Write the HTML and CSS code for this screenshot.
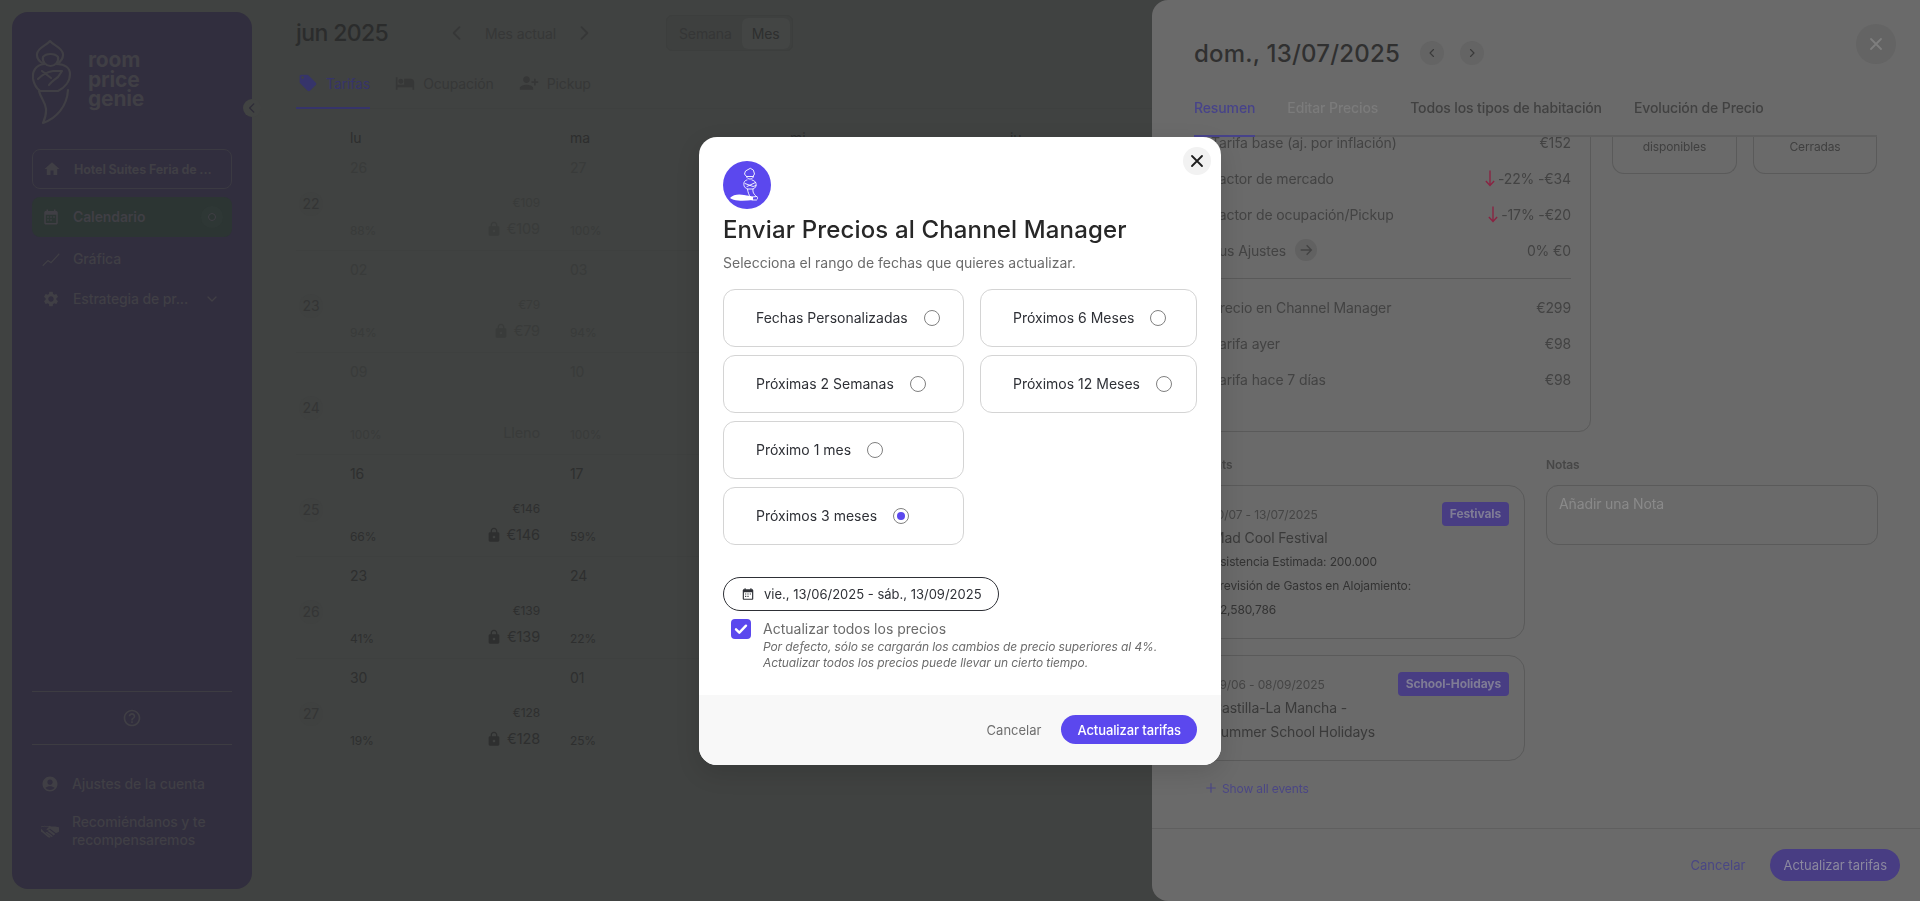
FILE: index.html
```html
<!DOCTYPE html>
<html lang="es">
<head>
<meta charset="utf-8">
<title>RoomPriceGenie</title>
<link rel="stylesheet" href="styles.css">
</head>
<body>
<svg class="defs" aria-hidden="true">
  <symbol id="i-tag" viewBox="0 0 24 24"><path d="M21.41 11.58l-9-9C12.05 2.22 11.55 2 11 2H4c-1.1 0-2 .9-2 2v7c0 .55.22 1.05.59 1.42l9 9c.36.36.86.58 1.41.58.55 0 1.05-.22 1.41-.59l7-7c.37-.36.59-.86.59-1.41 0-.55-.23-1.06-.59-1.42zM5.5 7C4.67 7 4 6.33 4 5.5S4.67 4 5.5 4 7 4.67 7 5.5 6.33 7 5.5 7z"/></symbol>
  <symbol id="i-bed" viewBox="0 0 24 24"><path d="M7 13c1.66 0 3-1.34 3-3S8.66 7 7 7s-3 1.34-3 3 1.34 3 3 3zm12-6h-8v7H3V5H1v15h2v-3h18v3h2v-9c0-2.21-1.79-4-4-4z"/></symbol>
  <symbol id="i-add" viewBox="0 0 24 24"><path d="M9 12c-2.21 0-4-1.79-4-4s1.790-4 4-4 4 1.79 4 4-1.79 4-4 4zm9-2V7h2v3h3v2h-3v3h-2v-3h-3v-2h3zM9 14c2.67 0 8 1.34 8 4v2H1v-2c0-2.66 5.33-4 8-4z"/></symbol>
  <symbol id="i-lock" viewBox="0 0 24 24"><path d="M18 8h-1V6c0-2.76-2.24-5-5-5S7 3.24 7 6v2H6c-1.100 0-2 .9-2 2v10c0 1.100.9 2 2 2h12c1.100 0 2-.9 2-2V10c0-1.100-.9-2-2-2zm-6 9c-1.100 0-2-.9-2-2s.9-2 2-2 2 .9 2 2-.9 2-2 2zm3.100-9H8.900V6c0-1.710 1.390-3.100 3.100-3.100 1.710 0 3.100 1.390 3.100 3.100v2z"/></symbol>
  <symbol id="i-home" viewBox="0 0 24 24"><path d="M10 20v-6h4v6h5v-8h3L12 3 2 12h3v8z"/></symbol>
  <symbol id="i-cal" viewBox="0 0 24 24"><path d="M9 11H7v2h2v-2zm4 0h-2v2h2v-2zm4 0h-2v2h2v-2zM9 15H7v2h2v-2zm4 0h-2v2h2v-2zm6-11h-1V2h-2v2H8V2H6v2H5c-1.110 0-1.990.9-1.990 2L3 20c0 1.100.890 2 2 2h14c1.100 0 2-.9 2-2V6c0-1.100-.9-2-2-2zm0 16H5V9h14v11z"/></symbol>
  <symbol id="i-gear" viewBox="0 0 24 24"><path d="M19.140 12.940c.04-.3.06-.61.06-.94 0-.32-.02-.64-.07-.94l2.030-1.580c.18-.14.23-.41.12-.61l-1.920-3.320c-.12-.22-.37-.29-.59-.22l-2.390.96c-.5-.38-1.030-.7-1.620-.94l-.36-2.540c-.04-.24-.24-.41-.48-.41h-3.840c-.24 0-.43.17-.47.41l-.36 2.540c-.59.24-1.130.57-1.620.94l-2.390-.96c-.22-.08-.47 0-.59.22L2.740 8.870c-.12.21-.08.47.12.61l2.030 1.580c-.05.3-.09.63-.09.94s.02.64.07.94l-2.030 1.580c-.18.14-.23.41-.12.61l1.920 3.320c.12.22.37.29.59.22l2.390-.96c.5.38 1.030.7 1.620.94l.36 2.540c.05.24.24.41.48.41h3.840c.24 0 .44-.17.47-.41l.36-2.540c.59-.24 1.130-.56 1.620-.94l2.390.96c.22.08.47 0 .59-.22l1.920-3.320c.12-.22.07-.47-.12-.61l-2.010-1.580zM12 15.600c-1.980 0-3.600-1.620-3.600-3.600s1.620-3.600 3.600-3.600 3.600 1.620 3.600 3.600-1.620 3.600-3.600 3.600z"/></symbol>
  <symbol id="i-user" viewBox="0 0 24 24"><path d="M12 2C6.480 2 2 6.480 2 12s4.480 10 10 10 10-4.480 10-10S17.520 2 12 2zm0 4c1.930 0 3.500 1.570 3.500 3.500S13.930 13 12 13s-3.500-1.570-3.500-3.500S10.070 6 12 6zm0 14c-2.030 0-4.430-.82-6.140-2.880C7.550 15.800 9.680 15 12 15s4.450.8 6.140 2.120C16.430 19.180 14.030 20 12 20z"/></symbol>
  <symbol id="i-help" viewBox="0 0 24 24"><path d="M11 18h2v-2h-2v2zm1-12c-2.210 0-4 1.790-4 4h2c0-1.100.9-2 2-2s2 .9 2 2c0 2-3 1.750-3 5h2c0-2.250 3-2.500 3-5 0-2.210-1.790-4-4-4zM12 2C6.480 2 2 6.480 2 12s4.480 10 10 10 10-4.480 10-10S17.520 2 12 2zm0 18c-4.410 0-8-3.590-8-8s3.590-8 8-8 8 3.590 8 8-3.590 8-8 8z"/></symbol>
  <symbol id="i-shake" viewBox="0 0 24 24"><path d="M0 7l5-1 3 1 3-1-4 4 2 1 3-2 8 6 4-2V7l-5-1-5 0-3-1-3 1-3-1-5 1zM0 8.500V13l2 1 7 6 2 1 2-1-9-7zM6 14l8 6 2-1-8-6zM9 12l8 6 2-2-8-6z"/></symbol>
  <symbol id="i-chart" viewBox="0 0 24 24"><path d="M1 21l7-7 4 3L23 5" fill="none" stroke="currentColor" stroke-width="1.500"/></symbol>
  <symbol id="i-check" viewBox="0 0 24 24"><path d="M4.500 12.500l5 5L19.500 7" fill="none" stroke="currentColor" stroke-width="3.600" stroke-linecap="round" stroke-linejoin="round"/></symbol>
  <symbol id="i-x" viewBox="0 0 24 24"><path d="M6 6l12 12M18 6L6 18" fill="none" stroke="currentColor" stroke-width="2.200" stroke-linecap="round"/></symbol>
  <symbol id="i-left" viewBox="0 0 24 24"><path d="M15 5l-7 7 7 7" fill="none" stroke="currentColor" stroke-width="2.200" stroke-linecap="round" stroke-linejoin="round"/></symbol>
  <symbol id="i-right" viewBox="0 0 24 24"><path d="M9 5l7 7-7 7" fill="none" stroke="currentColor" stroke-width="2.200" stroke-linecap="round" stroke-linejoin="round"/></symbol>
  <symbol id="i-down" viewBox="0 0 24 24"><path d="M6 9l6 6 6-6" fill="none" stroke="currentColor" stroke-width="2" stroke-linecap="round" stroke-linejoin="round"/></symbol>
  <symbol id="i-arrow-down" viewBox="0 0 16 24"><path d="M8 2v20M2.500 16L8 22l5.500-6" fill="none" stroke="currentColor" stroke-width="1.800"/></symbol>
  <symbol id="i-arrow-right" viewBox="0 0 24 24"><path d="M4 12h16M13 5l7 7-7 7" fill="none" stroke="currentColor" stroke-width="2"/></symbol>
  <symbol id="i-plus" viewBox="0 0 24 24"><path d="M12 4v16M4 12h16" fill="none" stroke="currentColor" stroke-width="2"/></symbol>
</svg>

<div class="app">
  <aside class="sidebar">
    <div class="brand">
      <svg class="brand-mark" viewBox="0 0 40 84" fill="none" stroke="currentColor" stroke-width="2.200" stroke-linejoin="round" stroke-linecap="round">
        <path d="M18 1C14 6 6 7 5 14c-.5 5 3 8 7 10M18 1c4 5 12 6 13 13 .5 5-3 8-6 10"/>
        <path d="M11 17c3-4 12-4 15 0 1 5-3 9-7.500 9S10 22 11 17z"/>
        <path d="M12 24C4 25 0 31 1 39c1 5 3 9 7 12h18c6-3 12-9 12-17 0-6-5-10-13-10"/>
        <path d="M6 39c4-4 9-7 15-8h9l-4 6c-4 3-7 5-9 8M10 31l9 7"/>
        <path d="M7 51c2 10 12 14 4 32 14-5 24-17 25-33"/>
      </svg>
      <div class="brand-name">room<br>price<br>genie</div>
    </div>
    <div class="property">
      <svg class="ico ico-18"><use href="#i-home"/></svg>
      <span>Hotel Suites Feria de ...</span>
    </div>
    <nav class="nav">
      <a class="nav-item nav-active"><svg class="ico ico-18"><use href="#i-cal"/></svg><span class="nav-text">Calendario</span><span class="nav-dot"></span></a>
      <a class="nav-item"><svg class="ico ico-18"><use href="#i-chart"/></svg><span class="nav-text">Gráfica</span></a>
      <a class="nav-item"><svg class="ico ico-18"><use href="#i-gear"/></svg><span class="nav-text nav-nowrap">Estrategia de pr...</span><svg class="ico ico-16 nav-caret"><use href="#i-down"/></svg></a>
    </nav>
    <div class="side-bottom">
      <div class="help"><svg class="ico ico-20"><use href="#i-help"/></svg></div>
      <a class="nav-item foot-item"><svg class="ico ico-18"><use href="#i-user"/></svg><span class="nav-text">Ajustes de la cuenta</span></a>
      <a class="nav-item foot-item"><svg class="ico ico-18"><use href="#i-shake"/></svg><span class="nav-text">Recomiéndanos y te recompensaremos</span></a>
    </div>
    <button class="collapse"><svg class="ico ico-14"><use href="#i-left"/></svg></button>
  </aside>

  <main class="main">
    <header class="cal-head">
      <h1 class="month">jun 2025</h1>
      <div class="month-nav">
        <svg class="ico ico-20"><use href="#i-left"/></svg>
        <span>Mes actual</span>
        <svg class="ico ico-20"><use href="#i-right"/></svg>
      </div>
      <div class="toggle"><span class="toggle-item">Semana</span><span class="toggle-item toggle-on">Mes</span></div>
    </header>
    <div class="cal-tabs">
      <div class="cal-tab cal-tab-on"><svg class="ico ico-20"><use href="#i-tag"/></svg><span>Tarifas</span></div>
      <div class="cal-tab"><svg class="ico ico-20"><use href="#i-bed"/></svg><span>Ocupación</span></div>
      <div class="cal-tab"><svg class="ico ico-20"><use href="#i-add"/></svg><span>Pickup</span></div>
    </div>
    <div class="cal-row cal-days"><span></span><span>lu</span><span>ma</span><span>mi</span><span>ju</span></div>

    <div class="cal-row week week-past"><span class="wk"><b>22</b></span>
      <div class="cell"><div class="date">26</div><div class="sm">€109</div><div class="low"><span class="pct">88%</span><span class="big"><svg class="ico ico-16"><use href="#i-lock"/></svg>€109</span></div></div>
      <div class="cell"><div class="date">27</div><div class="sm"></div><div class="low"><span class="pct">100%</span></div></div>
    </div>
    <div class="cal-row week week-past"><span class="wk"><b>23</b></span>
      <div class="cell"><div class="date">02</div><div class="sm">€79</div><div class="low"><span class="pct">94%</span><span class="big"><svg class="ico ico-16"><use href="#i-lock"/></svg>€79</span></div></div>
      <div class="cell"><div class="date">03</div><div class="sm"></div><div class="low"><span class="pct">94%</span></div></div>
    </div>
    <div class="cal-row week week-past"><span class="wk"><b>24</b></span>
      <div class="cell"><div class="date">09</div><div class="sm"></div><div class="low"><span class="pct">100%</span><span class="big">Lleno</span></div></div>
      <div class="cell"><div class="date">10</div><div class="sm"></div><div class="low"><span class="pct">100%</span></div></div>
    </div>
    <div class="cal-row week"><span class="wk"><b>25</b></span>
      <div class="cell"><div class="date">16</div><div class="sm">€146</div><div class="low"><span class="pct">66%</span><span class="big"><svg class="ico ico-16"><use href="#i-lock"/></svg>€146</span></div></div>
      <div class="cell"><div class="date">17</div><div class="sm"></div><div class="low"><span class="pct">59%</span></div></div>
    </div>
    <div class="cal-row week"><span class="wk"><b>26</b></span>
      <div class="cell"><div class="date">23</div><div class="sm">€139</div><div class="low"><span class="pct">41%</span><span class="big"><svg class="ico ico-16"><use href="#i-lock"/></svg>€139</span></div></div>
      <div class="cell"><div class="date">24</div><div class="sm"></div><div class="low"><span class="pct">22%</span></div></div>
    </div>
    <div class="cal-row week"><span class="wk"><b>27</b></span>
      <div class="cell"><div class="date">30</div><div class="sm">€128</div><div class="low"><span class="pct">19%</span><span class="big"><svg class="ico ico-16"><use href="#i-lock"/></svg>€128</span></div></div>
      <div class="cell"><div class="date">01</div><div class="sm"></div><div class="low"><span class="pct">25%</span></div></div>
    </div>
  </main>
</div>

<section class="drawer">
  <button class="drawer-close"><svg class="ico ico-20"><use href="#i-x"/></svg></button>
  <div class="drawer-title">
    <h2>dom., 13/07/2025</h2>
    <span class="step"><svg class="ico ico-12"><use href="#i-left"/></svg></span>
    <span class="step"><svg class="ico ico-12"><use href="#i-right"/></svg></span>
  </div>
  <div class="drawer-tabs">
    <span class="dtab dtab-on">Resumen</span>
    <span class="dtab dtab-off">Editar Precios</span>
    <span class="dtab">Todos los tipos de habitación</span>
    <span class="dtab">Evolución de Precio</span>
  </div>
  <div class="drawer-body">
    <div class="summary">
      <div class="price-card">
        <div class="price-row"><span>Tarifa base (aj. por inflación)</span><span>€152</span></div>
        <div class="price-row"><span>Factor de mercado</span><span class="val"><svg class="red-arrow"><use href="#i-arrow-down"/></svg>-22% -€34</span></div>
        <div class="price-row"><span>Factor de ocupación/Pickup</span><span class="val"><svg class="red-arrow"><use href="#i-arrow-down"/></svg>-17% -€20</span></div>
        <div class="price-row"><span class="val">Tus Ajustes<span class="go"><svg class="ico ico-16"><use href="#i-arrow-right"/></svg></span></span><span>0% €0</span></div>
        <div class="price-sep"></div>
        <div class="price-row"><span>Precio en Channel Manager</span><span>€299</span></div>
        <div class="price-row"><span>Tarifa ayer</span><span>€98</span></div>
        <div class="price-row"><span>Tarifa hace 7 días</span><span>€98</span></div>
      </div>
      <div class="tiles">
        <div class="tile">disponibles</div>
        <div class="tile">Cerradas</div>
      </div>
    </div>
    <div class="lower">
      <div>
        <div class="label">Events</div>
        <div class="event">
          <div class="event-head"><span class="event-date">10/07 - 13/07/2025</span><span class="chip">Festivals</span></div>
          <div class="event-name">Mad Cool Festival</div>
          <div class="event-meta">Asistencia Estimada: 200.000</div>
          <div class="event-meta">Previsión de Gastos en Alojamiento:</div>
          <div class="event-meta">€2,580,786</div>
        </div>
        <div class="event">
          <div class="event-head"><span class="event-date">09/06 - 08/09/2025</span><span class="chip">School-Holidays</span></div>
          <div class="event-name">Castilla-La Mancha -</div>
          <div class="event-name">Summer School Holidays</div>
        </div>
        <div class="show-all"><svg class="ico ico-14"><use href="#i-plus"/></svg><span>Show all events</span></div>
      </div>
      <div>
        <div class="label">Notas</div>
        <div class="note">Añadir una Nota</div>
      </div>
    </div>
  </div>
  <footer class="drawer-foot">
    <span class="foot-cancel">Cancelar</span>
    <span class="foot-save">Actualizar tarifas</span>
  </footer>
</section>

<div class="backdrop">
  <div class="modal">
    <button class="modal-close"><svg class="ico ico-20"><use href="#i-x"/></svg></button>
    <div class="modal-body">
      <div class="modal-icon">
        <svg viewBox="0 0 48 48" fill="none" stroke="#fff" stroke-width=".9" stroke-linejoin="round" stroke-linecap="round">
          <path d="M27 7.500l-4.500 2.500-1 3 2 2.500h6.500l1.500-2.500-1-3.500z"/>
          <path d="M23.500 15.500c.5 3.500 6.500 3.500 7 0"/>
          <path d="M24 19c-3 .5-3.500 3-3 5.500.5 2 2 3 3.500 3.500h5.500c2.500-1 3.500-3 3-5.500-.5-2-2-3-4-3.500"/>
          <path d="M22 22.500l8 3 3-1M24 25.500l8.500-4"/>
          <path d="M24.500 28c.5 4 1.500 6 3 8M30 28c-.5 3 .5 5 3.500 7.500"/>
          <path d="M29 36l5-.5c1 1 .5 3-.5 3.500H29z"/>
          <path d="M7 37c3-4 10-4 14-3 4 .5 7 1 9 2v3c-5 .5-10 1-15 .5-3-.3-6-1-8-2.500z" fill="#fff" stroke="none"/>
        </svg>
      </div>
      <h2 class="modal-title">Enviar Precios al Channel Manager</h2>
      <p class="modal-sub">Selecciona el rango de fechas que quieres actualizar.</p>
      <div class="options">
        <label class="option"><span>Fechas Personalizadas</span><i class="radio"></i></label>
        <label class="option"><span>Próximos 6 Meses</span><i class="radio"></i></label>
        <label class="option"><span>Próximas 2 Semanas</span><i class="radio"></i></label>
        <label class="option"><span>Próximos 12 Meses</span><i class="radio"></i></label>
        <label class="option"><span>Próximo 1 mes</span><i class="radio"></i></label>
        <span></span>
        <label class="option"><span>Próximos 3 meses</span><i class="radio radio-on"></i></label>
      </div>
      <div class="date-pill"><svg class="ico ico-14"><use href="#i-cal"/></svg><span>vie., 13/06/2025 - sáb., 13/09/2025</span></div>
      <div class="check-row">
        <span class="checkbox"><svg class="ico ico-16"><use href="#i-check"/></svg></span>
        <div>
          <div class="check-label">Actualizar todos los precios</div>
          <div class="check-note">Por defecto, sólo se cargarán los cambios de precio superiores al 4%.<br>Actualizar todos los precios puede llevar un cierto tiempo.</div>
        </div>
      </div>
    </div>
    <footer class="modal-foot">
      <span class="modal-cancel">Cancelar</span>
      <button class="modal-save">Actualizar tarifas</button>
    </footer>
  </div>
</div>
</body>
</html>
```
FILE: styles.css
```css
* { box-sizing: border-box; }
html, body { margin: 0; height: 901px; overflow: hidden; }
body { background: #404241; font-family: Inter, "Liberation Sans", sans-serif; font-size: 14px; color: #2e2f2f; }
h1, h2, p { margin: 0; font-weight: 500; }
button { border: 0; padding: 0; font: inherit; }
.defs { position: absolute; width: 0; height: 0; }
.ico { display: block; flex: none; fill: currentColor; }
.ico-12 { width: 12px; height: 12px; }
.ico-14 { width: 14px; height: 14px; }
.ico-16 { width: 16px; height: 16px; }
.ico-18 { width: 18px; height: 18px; }
.ico-20 { width: 20px; height: 20px; }

.app { display: flex; height: 901px; padding: 12px 0 12px 12px; }

/* sidebar */
.sidebar { position: relative; width: 240px; flex: none; background: #312e3e; border-radius: 16px; padding: 28px 20px 0; color: #403f45; display: flex; flex-direction: column; letter-spacing: -.12px; }
.brand { display: flex; align-items: flex-start; height: 85px; }
.brand-mark { width: 40px; height: 84px; flex: none; }
.brand-name { margin: 10px 0 0 16px; font-size: 21px; font-weight: 700; line-height: 19.5px; letter-spacing: -.2px; }
.property { margin-top: 24px; height: 40px; border: 1.5px solid #3b3a42; border-radius: 8px; display: flex; align-items: center; padding: 0 10px; gap: 13px; font-size: 12.500px; font-weight: 700; white-space: nowrap; }
.nav { margin-top: 8px; display: flex; flex-direction: column; }
.nav-item { display: flex; align-items: center; min-height: 40px; padding: 0 10px; gap: 13px; font-size: 14px; font-weight: 500; }
.nav-active { background: #2c3533; border-radius: 8px; font-weight: 600; margin-bottom: 2px; }
.nav-text { flex: 1; line-height: 18px; }
.nav-nowrap { white-space: nowrap; }
.nav-dot { width: 8px; height: 8px; border-radius: 50%; border: 1px solid #403f45; margin-right: 6px; box-shadow: 0 0 0 7px #2e3735; }
.nav-caret { margin-right: 2px; }
.side-bottom { margin-top: auto; padding-bottom: 39px; }
.help { border-top: 1px solid #3d3c42; border-bottom: 1px solid #3d3c42; height: 54px; display: flex; align-items: center; justify-content: center; margin-bottom: 19px; }
.foot-item { padding-left: 9px; }
.foot-item + .foot-item { margin-top: 8px; min-height: 38px; }
.collapse { position: absolute; top: 87px; right: -9px; width: 18px; height: 18px; border-radius: 50%; background: #414342; color: #2e2c38; display: flex; align-items: center; justify-content: center; }

/* calendar */
.main { flex: 1; min-width: 0; padding-left: 44px; color: #2e2f2f; letter-spacing: -.12px; }
.cal-head { display: flex; align-items: center; height: 38px; margin-top: 2px; }
.month { width: 151px; font-size: 23px; font-weight: 500; letter-spacing: -.6px; color: #2b2c2c; }
.month-nav { display: flex; align-items: center; gap: 18px; color: #363737; width: 219px; }
.toggle { display: flex; align-items: center; height: 36px; padding: 0 2px 0 12px; background: #3e403f; border: 1px solid #3c3e3d; border-radius: 6px; color: #353636; gap: 10px; }
.toggle-on { background: #434544; border-radius: 6px; padding: 7px 10px; color: #2e2f2f; }
.cal-tabs { display: flex; gap: 23px; height: 47px; margin-top: 10px; border-bottom: 1px solid #3e403f; width: 1200px; }
.cal-tab { display: flex; align-items: center; gap: 8px; padding: 0 0 3px 2px; color: #363737; border-bottom: 2px solid transparent; height: 47px; }
.cal-tab-on { color: #36346a; border-bottom-color: #36346a; }
.cal-row { display: grid; grid-template-columns: 50px 220px 220px 220px 220px; }
.cal-days { margin-top: 18px; height: 22px; line-height: 22px; color: #2d2e2e; }
.cal-days span { padding-left: 4px; }
.week { height: 102px; border-bottom: 1px solid #3e403f; width: 1200px; }
.week-past { color: #393b3a; }
.week:last-child { border-bottom: 0; }
.wk { display: flex; align-items: center; padding: 8px 0 0 3px; color: #343535; font-size: 14px; }
.wk b { font-weight: 400; width: 24px; height: 24px; line-height: 24px; text-align: center; border-radius: 50%; background: #3f4140; }
.cell { padding: 9px 26px 0 4px; }
.date { height: 20px; line-height: 20px; }
.sm { height: 20px; line-height: 20px; margin-top: 15px; text-align: right; font-size: 12px; }
.low { display: flex; justify-content: space-between; align-items: center; height: 20px; margin-top: 7px; }
.pct { font-size: 12px; }
.big { display: flex; align-items: center; gap: 5px; font-size: 14.500px; margin-bottom: 3px; }

/* drawer */
.drawer { position: fixed; top: 0; right: 0; width: 768px; height: 901px; background: #6a6a6a; border-radius: 16px 0 0 16px; color: #3a3a3a; display: flex; flex-direction: column; padding-top: 33px; letter-spacing: -.12px; }
.drawer-close { position: absolute; top: 24px; right: 24px; width: 40px; height: 40px; border-radius: 50%; background: #646464; color: #7e7e7e; display: flex; align-items: center; justify-content: center; }
.drawer-title { display: flex; align-items: center; height: 40px; padding-left: 42px; gap: 8px; }
.drawer-title h2 { font-size: 24px; font-weight: 500; color: #303030; margin-right: 12px; letter-spacing: .2px; }
.step { width: 24px; height: 24px; border-radius: 50%; background: #646464; color: #3a3a3a; display: flex; align-items: center; justify-content: center; margin-right: 8px; }
.drawer-tabs { display: flex; gap: 32px; margin: 21px 43px 0 42px; height: 43px; line-height: 28px; font-weight: 500; border-bottom: 2px solid #5f5f5f; color: #414141; }
.dtab { height: 43px; }
.dtab-on { color: #47438a; border-bottom: 2px solid #47438a; }
.dtab-off { color: #7b7b7b; }
.drawer-body { flex: 1; min-height: 0; overflow: hidden; padding: 0 43px 0 42px; }
.summary { display: grid; grid-template-columns: 397px 1fr; gap: 21px; margin-top: -39px; height: 334px; }
.price-card { border: 1px solid #5a5a5a; border-radius: 12px; padding: 25px 19px 0 16px; height: 334px; }
.price-row { display: flex; justify-content: space-between; align-items: center; height: 36px; color: #434343; }
.val { display: flex; align-items: center; }
.red-arrow { width: 12px; height: 20px; fill: none; color: #8a2342; margin-right: 2px; }
.go { width: 22px; height: 22px; margin-left: 9px; border-radius: 50%; background: #616161; color: #434343; display: flex; align-items: center; justify-content: center; }
.price-sep { height: 1px; background: #595959; margin: 10px 0; }
.tiles { display: grid; grid-template-columns: 125px 124px; gap: 16px; height: 76px; }
.tile { border: 1px solid #5a5a5a; border-top: 0; border-radius: 0 0 12px 12px; height: 76px; padding-top: 40px; font-size: 12px; color: #404040; text-align: center; line-height: 18px; }
.lower { display: grid; grid-template-columns: 331px 332px; gap: 21px; }
.label { margin-top: 24px; margin-bottom: 11px; height: 18px; line-height: 18px; font-size: 12px; font-weight: 600; color: #474747; }
.event { border: 1px solid #5a5a5a; border-radius: 16px; padding: 16px 15px 16px 17px; margin-bottom: 16px; }
.event-head { display: flex; justify-content: space-between; align-items: center; height: 24px; }
.event-date { font-size: 12px; color: #454545; }
.chip { height: 24px; line-height: 24px; padding: 0 8px; border-radius: 4px; background: #483d83; color: #7f7c95; font-size: 12px; font-weight: 700; }
.event-name { line-height: 24px; color: #3a3a3a; }
.event-meta { line-height: 24px; font-size: 12px; color: #333; }
.show-all { display: flex; align-items: center; gap: 4px; height: 20px; margin-top: 17px; padding-left: 10px; font-size: 12px; color: #4b4785; }
.note { height: 60px; border: 1px solid #5a5a5a; border-radius: 12px; padding: 9px 12px; color: #8a8a8a; line-height: 18px; }
.drawer-foot { height: 73px; border-top: 1px solid #5f5f5f; display: flex; align-items: center; justify-content: flex-end; padding-right: 20px; gap: 25px; font-size: 13px; letter-spacing: 0; }
.foot-cancel { color: #4a4785; }
.foot-save { height: 32px; line-height: 32px; padding: 0 13px; border-radius: 16px; background: #483d83; color: #8b889f; }

/* modal */
.backdrop { position: fixed; inset: 0; display: flex; align-items: center; justify-content: center; backdrop-filter: blur(.6px); }
.modal { position: relative; width: 522px; height: 628px; background: #fff; border-radius: 18px; overflow: hidden; color: #2e3036; box-shadow: 0 8px 24px rgba(0,0,0,.12); display: flex; flex-direction: column; }
.modal-close { position: absolute; top: 10px; right: 10px; width: 28px; height: 28px; border-radius: 50%; background: #f2f2f2; color: #1e1e1e; display: flex; align-items: center; justify-content: center; }
.modal-body { flex: 1; padding: 24px 24px 0; }
.modal-icon { width: 48px; height: 48px; border-radius: 50%; background: #5b48ee; }
.modal-icon svg { display: block; width: 48px; height: 48px; }
.modal-title { margin-top: 5px; font-size: 24px; line-height: 32px; font-weight: 500; color: #272727; letter-spacing: .15px; }
.modal-sub { margin-top: 7px; line-height: 20px; font-weight: 400; color: #6b6b6b; }
.options { display: grid; grid-template-columns: 241px 217px; gap: 8px 16px; margin-top: 16px; }
.option { display: flex; align-items: center; gap: 16px; height: 58px; padding-left: 32px; border: 1px solid #d4d4d4; border-radius: 12px; color: #2e3036; }
.radio { width: 16px; height: 16px; flex: none; border-radius: 50%; border: 1px solid #808080; display: flex; align-items: center; justify-content: center; }
.radio-on::before { content: ""; width: 8px; height: 8px; border-radius: 50%; background: #5b48ee; }
.date-pill { margin-top: 32px; width: 276px; height: 34px; border: 1px solid #2e3036; border-radius: 17px; display: flex; align-items: center; padding-left: 17px; gap: 9px; font-size: 13px; }
.check-row { display: flex; gap: 12px; margin: 8px 0 0 8px; }
.checkbox { width: 20px; height: 20px; flex: none; border-radius: 4px; background: #5b48ee; color: #fff; display: flex; align-items: center; justify-content: center; }
.check-label { line-height: 20px; color: #6b6b6b; }
.check-note { font-size: 12px; line-height: 16px; font-style: italic; color: #6b6b6b; letter-spacing: -.09px; }
.modal-foot { height: 70px; background: #f8f8f8; display: flex; align-items: center; justify-content: flex-end; gap: 20px; padding: 0 24px; font-size: 13px; }
.modal-cancel { color: #6f6f6f; }
.modal-save { height: 29px; padding: 0 16px; border-radius: 15px; background: #5b48ee; color: #fff; font-size: 13px; font-weight: 500; letter-spacing: -.1px; }
```
